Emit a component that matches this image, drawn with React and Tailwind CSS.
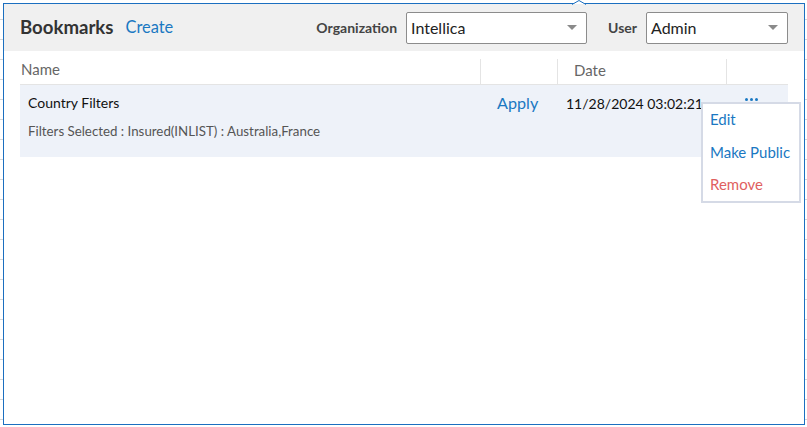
import React from "react";

const Caret = () => (
  <svg width="10" height="6" viewBox="0 0 10 6" className="shrink-0">
    <path d="M0 0 L10 0 L5 5 Z" fill="#8a8a8a" />
  </svg>
);

const Select = ({ value, width }) => (
  <div
    className={`${width} h-[32px] border border-[#8c8c8c] rounded-[2px] bg-white flex items-center justify-between pl-[4px] pr-[9px] text-[16px] text-[#222]`}
  >
    <span>{value}</span>
    <Caret />
  </div>
);

export default function App() {
  return (
    <div
      className="w-[807px] h-[427px] bg-white overflow-hidden bg-[repeating-linear-gradient(to_bottom,transparent_0px,transparent_19px,#d6d6d6_19px,#d6d6d6_20px)]"
      style={{ fontFamily: "Lato, 'Open Sans', sans-serif" }}
    >
      <div className="ml-[3px] mt-[3px] w-[802px] h-[422px] border border-[#1b6fc0] bg-white relative">
        {/* notch */}
        <svg
          width="14"
          height="6"
          viewBox="0 0 14 6"
          className="absolute left-[568px] top-[-4px]"
        >
          <path d="M0 4.5 L7 0.5 L14 4.5" fill="white" stroke="#1b6fc0" strokeWidth="1" />
          <rect x="1.5" y="4" width="11" height="2" fill="#f0f0f0" />
        </svg>

        {/* header */}
        <div className="h-[47px] bg-[#f0f0f0] flex items-center pl-[16px] pr-[16px]">
          <span className="text-[18.6px] font-bold text-[#333]">Bookmarks</span>
          <span className="ml-[12px] text-[16.4px] text-[#1a78c2]">Create</span>
          <div className="ml-auto flex items-center">
            <span className="text-[14px] font-bold text-[#444] mr-[9px]">Organization</span>
            <Select value="Intellica" width="w-[181px]" />
            <span className="ml-[21px] text-[14px] font-bold text-[#444] mr-[9px]">User</span>
            <Select value="Admin" width="w-[142px]" />
          </div>
        </div>

        {/* table */}
        <div className="mx-[16px]">
          <div className="h-[34px] flex border-b border-[#e4e4e4] text-[15px] text-[#666]">
            <div className="w-[460px] pl-[1px] flex items-center pt-[3px]">Name</div>
            <div className="w-[77px] mt-[8px] border-l border-[#e4e4e4]" />
            <div className="w-[169px] mt-[8px] border-l border-[#e4e4e4] pl-[16px] flex items-center pb-[3px]">
              Date
            </div>
            <div className="flex-1 mt-[8px] border-l border-[#e4e4e4]" />
          </div>

          <div className="h-[72px] bg-[#eef2f9] flex relative">
            <div className="w-[460px] pl-[8px] pt-[7px] flex flex-col">
              <span className="text-[14px] text-[#111]">Country Filters</span>
              <span className="mt-[9px] text-[13.3px] text-[#555]">
                Filters Selected : Insured(INLIST) : Australia,France
              </span>
            </div>
            <div className="w-[77px] pl-[17px] pt-[6px] text-[16.2px] text-[#1a78c2]">Apply</div>
            <div className="w-[169px] pl-[9px] pt-[8px] text-[14px] text-[#111]">
              11/28/2024 03:02:21
            </div>
            <div className="flex-1 pl-[19px] pt-[13px]">
              <div className="flex gap-[2px]">
                <span className="w-[3px] h-[3px] rounded-full bg-[#1a78c2]" />
                <span className="w-[3px] h-[3px] rounded-full bg-[#1a78c2]" />
                <span className="w-[3px] h-[3px] rounded-full bg-[#1a78c2]" />
              </div>
            </div>

            {/* actions menu */}
            <div className="absolute left-[681px] top-[17px] w-[100px] h-[101px] bg-white border-2 border-[#d5dae6] pl-[7px] pt-[4px] text-[15px] text-[#1a78c2]">
              <div className="h-[32.5px] leading-[22px]">Edit</div>
              <div className="h-[32.5px] leading-[22px]">Make Public</div>
              <div className="h-[32.5px] leading-[22px] text-[#e05f5f]">Remove</div>
            </div>
          </div>
        </div>
      </div>
    </div>
  );
}
